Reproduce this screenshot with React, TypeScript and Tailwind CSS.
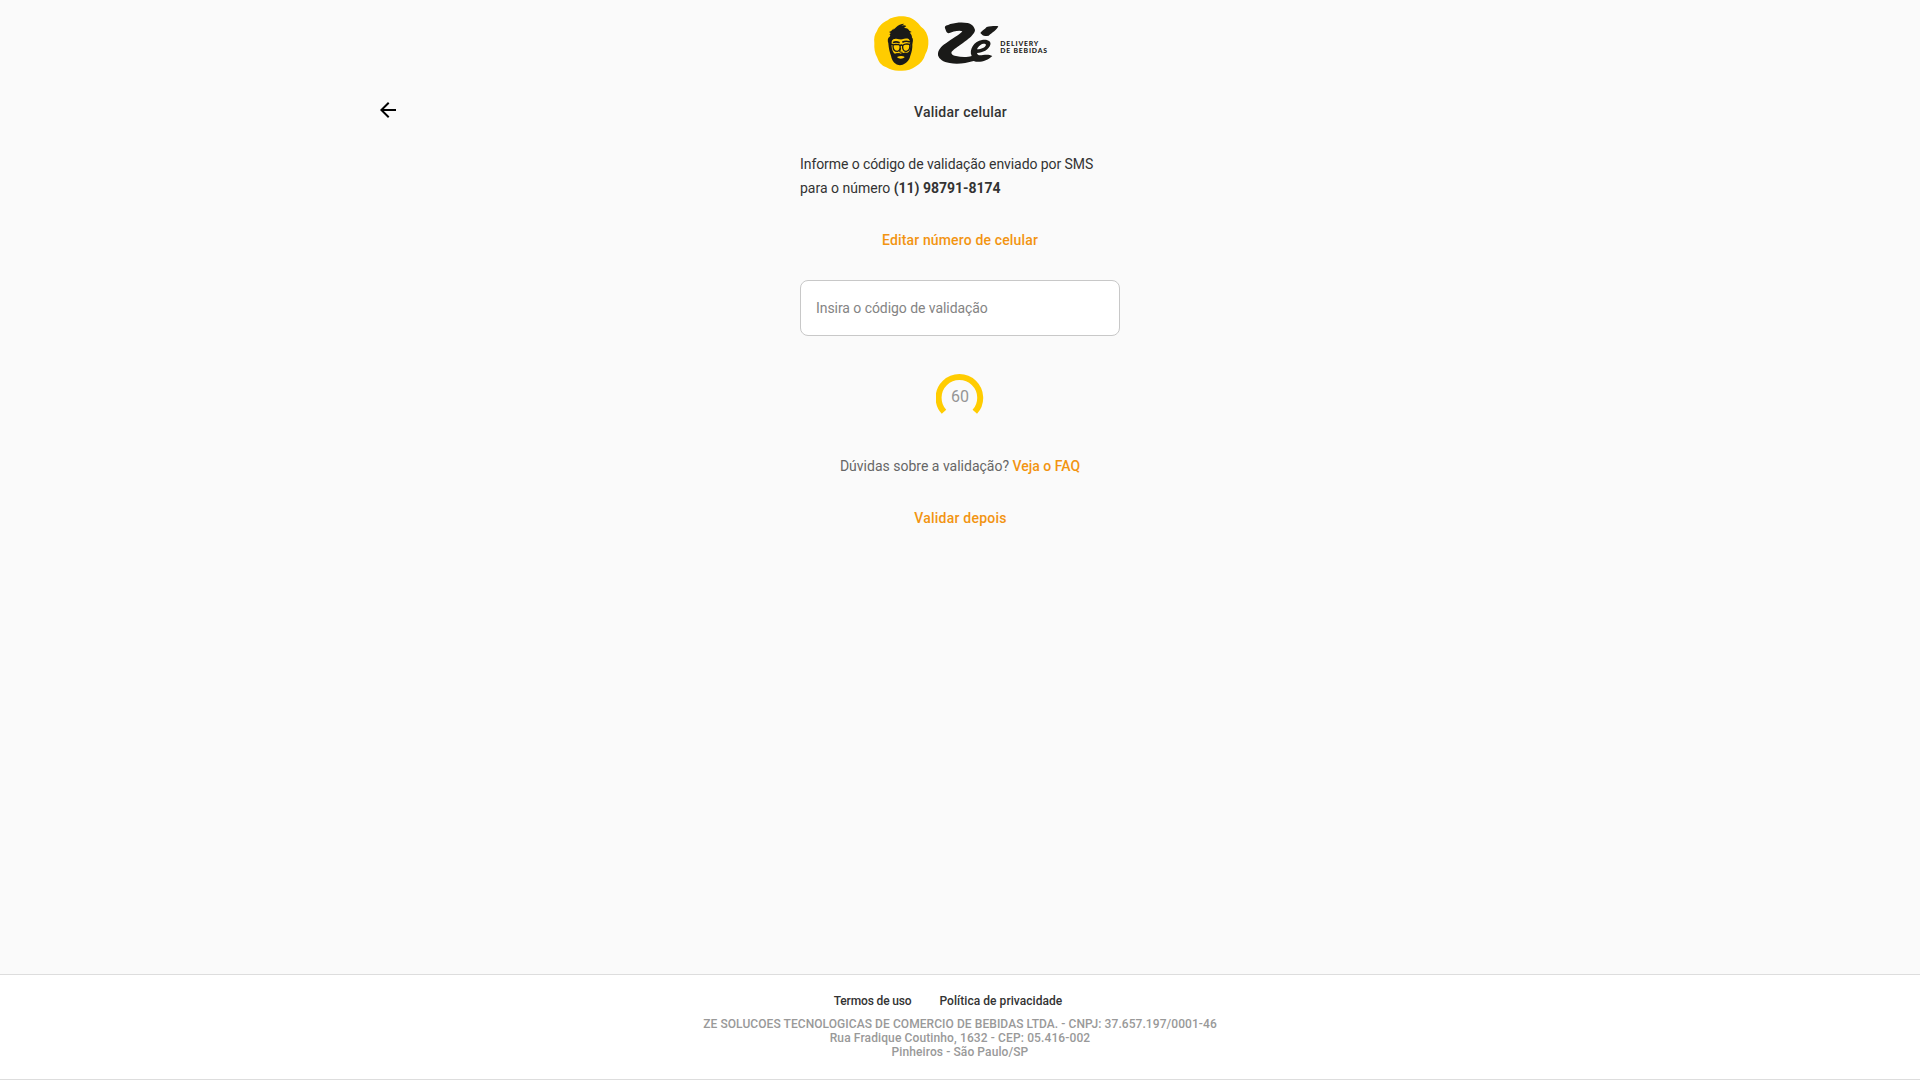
const ORANGE_LINK = "text-sm leading-6 font-medium text-[#f29411]";

function Logo() {
  return (
    <svg viewBox="0 0 570 210" className="h-[70px] w-[190px]" aria-label="Zé Delivery de Bebidas">
      <path
        fill="#ffcc00"
        d="M80 30C96 23 118 23 132 28C148 33 159 45 168 56C181 65 189 80 190 97C191 114 188 127 181 139C177 155 167 167 153 175C139 186 122 189 105 188C89 189 76 185 64 178C49 172 41 162 37 149C29 136 27 120 28 105C26 90 29 78 36 69C42 53 55 43 68 37C72 33 76 31 80 30Z"
      />
      <path
        fill="#1a1a18"
        d="M70 106C67 97 68 89 74 86L76 82C71 79 76 78 77 75L72 72C80 69 83 65 86 60L84 65C92 60 96 53 104 50C109 48 113 47 118 47L109 54C114 51 120 52 124 54L117 60C125 59 131 63 133 68L140 72L134 74C139 78 141 83 141 89C145 91 144 101 142 107C143 120 140 133 136 143C134 154 128 161 121 166C112 173 99 173 93 168C84 162 80 154 78 143C74 133 71 120 70 106Z"
      />
      <path
        fill="#ffcc00"
        d="M80 103C80 94 87 92 94 92C101 93 107 95 112 94C118 91 126 91 131 93C136 97 137 111 135 122C134 130 130 134 125 135C119 134 112 135 106 137C100 134 92 139 87 136C80 126 79 116 80 103Z"
      />
      <g fill="none" stroke="#1a1a18" strokeWidth="4">
        <path d="M84 113C84 109 90 109 101 110C108 111 107 129 97 130C88 130 84 123 84 113ZM113 113C115 108 126 107 134 109C136 120 133 129 124 130C115 131 112 122 113 113ZM105 113Q109 109 113 113M72 108L85 110M134 109L141 105" />
        <path strokeWidth="5" d="M84 104Q92 99 104 104M112 103Q122 97 135 102" />
        <path strokeWidth="3" d="M107 120L104 132L113 133" />
      </g>
      <path fill="#1a1a18" d="M84 141C93 134 102 135 107 138C115 133 124 134 134 134L128 150C116 142 98 145 92 152Z" />
      <path fill="#ffcc00" d="M96 147C104 143 114 143 119 147C115 153 101 154 96 147Z" />

      <g fill="#1a1a18">
        <path d="M240 61C238 51 247 53 256 48C273 43 294 42 307 45C318 46 328 55 330 66C330 76 317 87 306 96C289 109 269 121 260 131C257 137 263 142 273 144C289 148 307 148 320 144C311 125 328 99 351 96C370 93 379 102 376 110C372 125 353 134 336 135C337 143 345 143 354 141C366 140 374 140 382 144C367 158 343 166 326 159C302 166 276 170 254 165C235 163 222 153 219 142C217 124 232 112 249 101C269 87 287 78 292 70C284 65 262 71 251 76C243 75 243 66 240 61ZM336 124C349 124 361 118 363 111C362 103 342 107 336 124Z" />
        <path d="M346 75C350 68 359 65 365 57C378 54 394 53 400 55C396 65 381 75 371 83C363 84 357 85 353 82Z" />
        <g fontFamily="Lato, sans-serif" fontWeight="900" fontSize="20.5" textRendering="geometricPrecision">
          <text x="406" y="113" textLength="114" lengthAdjust="spacing">DELIVERY</text>
          <text x="406" y="136" textLength="140" lengthAdjust="spacing">DE BEBIDAS</text>
        </g>
      </g>
    </svg>
  );
}

function Countdown() {
  return (
    <div className="mt-9 grid h-12 w-12 place-items-center">
      <svg viewBox="0 0 48 48" className="col-start-1 row-start-1 h-12 w-12">
        <path d="M8 39.8A20.8 20.8 0 1 1 38.8 39.8" fill="none" stroke="#ffcc00" strokeWidth="6" />
      </svg>
      <span className="col-start-1 row-start-1 pt-0.5 text-base leading-6 text-[#959595]">60</span>
    </div>
  );
}

export default function App() {
  return (
    <div className="flex h-screen flex-col bg-[#fafafa] font-[Roboto,sans-serif] text-[#333333]">
      <header className="flex justify-center pt-2">
        <Logo />
      </header>

      <main className="mx-auto flex w-[1168px] flex-1 flex-col">
        <div className="mt-5 grid h-7 grid-cols-[1fr_auto_1fr] items-center">
          <button className="-mt-1 h-6 w-6" aria-label="Voltar">
            <svg viewBox="0 0 24 24" className="h-6 w-6 fill-black">
              <path d="M20 11H7.83l5.59-5.59L12 4l-8 8 8 8 1.41-1.41L7.83 13H20v-2z" />
            </svg>
          </button>
          <h1 className="pl-px text-sm leading-6 font-medium tracking-[0.23px]">Validar celular</h1>
        </div>

        <section className="mx-auto mt-[26px] flex w-80 flex-col items-center">
          <p className="w-full text-sm leading-6">
            <span className="tracking-[-0.08px]">Informe o código de validação enviado por SMS</span>
            <br />
            para o número <strong className="tracking-[-0.02px]">(11) 98791-8174</strong>
          </p>
          <a href="#" className={`mt-7 tracking-[0.15px] ${ORANGE_LINK}`}>Editar número de celular</a>
          <input
            className="mt-7 h-14 w-full rounded-lg border border-[#c8c8c8] bg-white px-[15px] text-sm tracking-[-0.06px] placeholder:text-[#848484]"
            placeholder="Insira o código de validação"
          />
          <Countdown />
          <p className="mt-[34px] text-sm leading-6 text-[#666666]">
            Dúvidas sobre a validação? <a href="#" className="font-medium text-[#f29411]">Veja o FAQ</a>
          </p>
          <a href="#" className={`mt-7 pl-px tracking-[0.22px] ${ORANGE_LINK}`}>Validar depois</a>
        </section>
      </main>

      <footer className="flex h-[106px] flex-col items-center border-y border-[#dddddd] bg-white pt-[19px] text-xs leading-[14px] font-medium">
        <nav className="mr-6 flex gap-7">
          <a href="#" className="tracking-[-0.15px]">Termos de uso</a>
          <a href="#" className="tracking-[0.05px]">Política de privacidade</a>
        </nav>
        <address className="mt-[9px] text-center text-[#999999] not-italic">
          <span className="tracking-[0.07px]">ZE SOLUCOES TECNOLOGICAS DE COMERCIO DE BEBIDAS LTDA. - CNPJ: 37.657.197/0001-46</span>
          <br />
          <span className="tracking-[0.12px]">Rua Fradique Coutinho, 1632 - CEP: 05.416-002</span>
          <br />
          <span className="tracking-[0.1px]">Pinheiros - São Paulo/SP</span>
        </address>
      </footer>
    </div>
  );
}
